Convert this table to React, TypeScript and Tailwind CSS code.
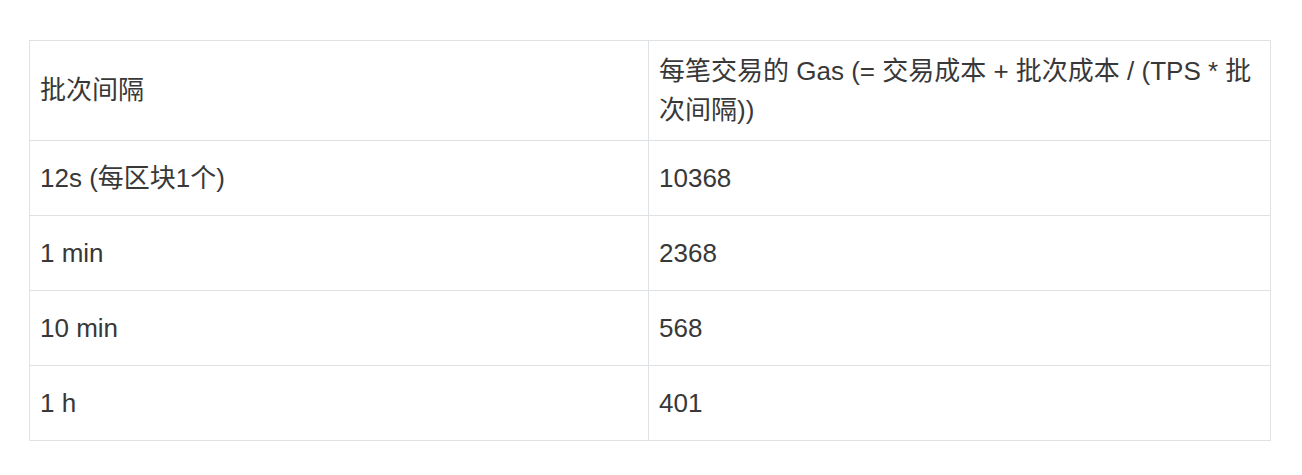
import React from "react";

const rows: [string, string][] = [
  ["12s (每区块1个)", "10368"],
  ["1 min", "2368"],
  ["10 min", "568"],
  ["1 h", "401"],
];

export default function App() {
  return (
    <div
      className="w-[1302px] h-[475px] bg-white pt-[40px] pl-[29px] text-[#383838] text-[26px] leading-[39px]"
      style={{ fontFamily: '"Liberation Sans", "Noto Sans CJK SC", sans-serif' }}
    >
      <table className="table-fixed border-collapse w-[1241px]">
        <colgroup>
          <col className="w-[619px]" />
          <col className="w-[622px]" />
        </colgroup>
        <thead>
          <tr className="h-[100px]">
            <th className="border border-[#dfe2e5] px-[10px] py-0 text-left font-normal align-middle">
              批次间隔
            </th>
            <th className="border border-[#dfe2e5] px-[10px] py-0 text-left font-normal align-middle">
              每笔交易的 Gas (= 交易成本 + 批次成本 / (TPS * 批次间隔))
            </th>
          </tr>
        </thead>
        <tbody>
          {rows.map(([a, b]) => (
            <tr key={a} className="h-[75px]">
              <td className="border border-[#dfe2e5] px-[10px] py-0 align-middle">{a}</td>
              <td className="border border-[#dfe2e5] px-[10px] py-0 align-middle">{b}</td>
            </tr>
          ))}
        </tbody>
      </table>
    </div>
  );
}
